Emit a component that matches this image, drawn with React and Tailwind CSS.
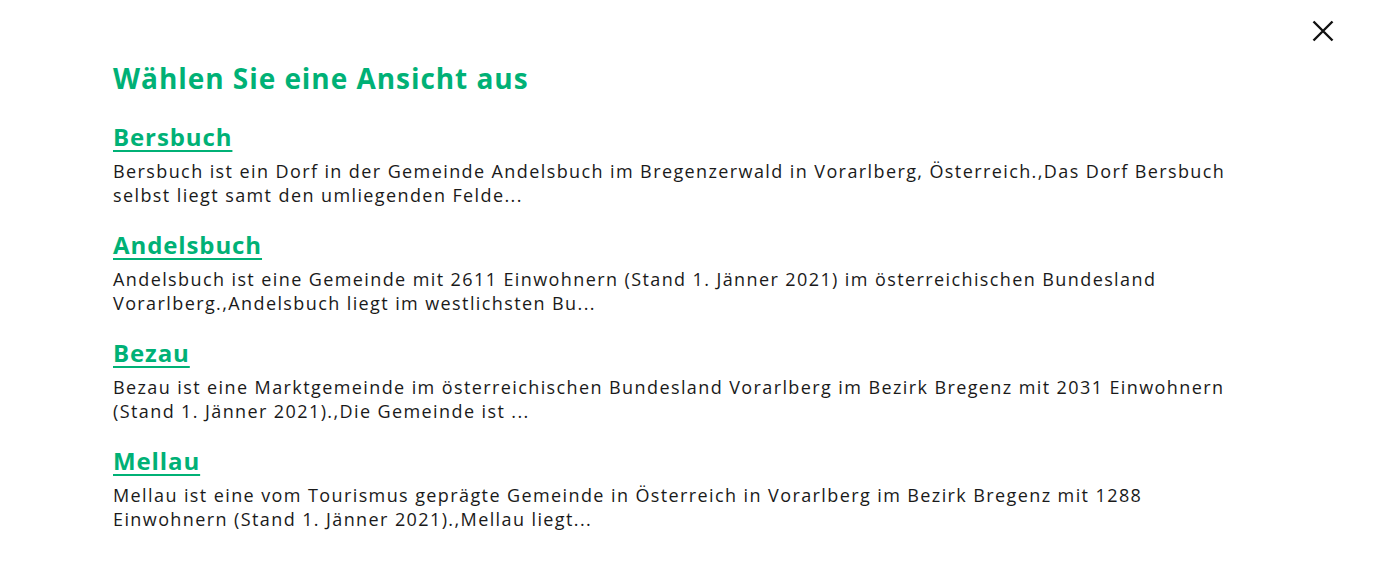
const places = [
  {
    name: 'Bersbuch',
    lines: [
      'Bersbuch ist ein Dorf in der Gemeinde Andelsbuch im Bregenzerwald in Vorarlberg, Österreich.,Das Dorf Bersbuch',
      'selbst liegt samt den umliegenden Felde...',
    ],
  },
  {
    name: 'Andelsbuch',
    lines: [
      'Andelsbuch ist eine Gemeinde mit 2611 Einwohnern (Stand 1. Jänner 2021) im österreichischen Bundesland',
      'Vorarlberg.,Andelsbuch liegt im westlichsten Bu...',
    ],
  },
  {
    name: 'Bezau',
    lines: [
      'Bezau ist eine Marktgemeinde im österreichischen Bundesland Vorarlberg im Bezirk Bregenz mit 2031 Einwohnern',
      '(Stand 1. Jänner 2021).,Die Gemeinde ist ...',
    ],
  },
  {
    name: 'Mellau',
    lines: [
      'Mellau ist eine vom Tourismus geprägte Gemeinde in Österreich in Vorarlberg im Bezirk Bregenz mit 1288',
      'Einwohnern (Stand 1. Jänner 2021).,Mellau liegt...',
    ],
  },
]

export default function App() {
  return (
    <div className="relative min-h-[581px] w-full bg-white font-['Open_Sans',sans-serif] text-[#1a1a1a]">
      {/* Close button */}
      <button className="absolute left-[1312px] top-[20px] w-[22px] h-[22px]">
        <svg viewBox="0 0 22 22" width="22" height="22" fill="none" stroke="#111" strokeWidth="2.4">
          <path d="M1.5 1.5 L20.5 20.5 M20.5 1.5 L1.5 20.5" />
        </svg>
      </button>

      <div className="pl-[113px] pr-[100px] pt-[60px]">
        <h1 className="text-[28px] leading-[36px] font-bold text-[#00b176] tracking-[0.95px]">
          Wählen Sie eine Ansicht aus
        </h1>

        <div className="mt-[25px] flex flex-col gap-[22px]">
          {places.map((p) => (
            <div key={p.name}>
              <a
                href="#"
                className="text-[24px] leading-[32px] font-bold text-[#00b176] tracking-[0.9px] underline decoration-[2px] underline-offset-[4px]"
              >
                {p.name}
              </a>
              <p className="mt-[6px] text-[18px] leading-[24px] tracking-[1.4px]">
                {p.lines.map((l) => (
                  <span key={l} className="block whitespace-nowrap">
                    {l}
                  </span>
                ))}
              </p>
            </div>
          ))}
        </div>
      </div>
    </div>
  )
}
